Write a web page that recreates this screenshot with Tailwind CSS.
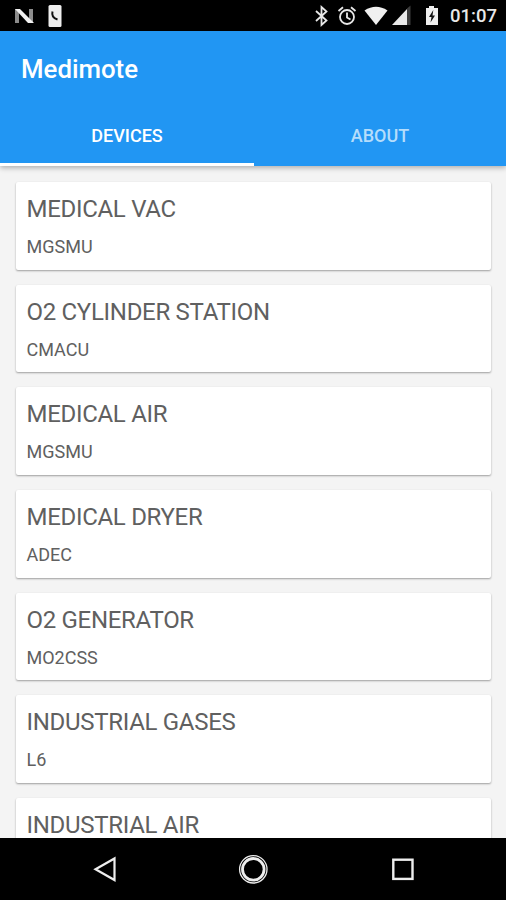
<!DOCTYPE html>
<html lang="en">
<head>
<meta charset="utf-8">
<title>Medimote</title>
<script src="https://cdn.jsdelivr.net/npm/@tailwindcss/browser@4"></script>
</head>
<body class="w-[506px] h-[900px] overflow-hidden flex flex-col bg-[#f4f4f4] font-[Roboto,sans-serif]">
<div class="h-[31px] shrink-0 bg-black flex items-center justify-between">
  <svg class="w-[80px] h-[31px]" viewBox="0 0 80 31">
    <path d="M15 9h4v14h-4zM29 9h4v14h-4z" fill="#8c8c8c"/>
    <path d="M15 9h5l14 14h-6z" fill="#f2f2f2"/>
    <rect x="48.500" y="5" width="13" height="22" rx="1.500" fill="#eee"/>
    <path d="M52.500 11.500q-1.500 6 5 8" fill="none" stroke="#111" stroke-width="2"/>
  </svg>
  <div class="flex items-center">
    <svg class="w-[142px] h-[31px]" viewBox="306 0 142 31" fill="none">
      <path d="M316 11l10.500 9.500-5 4.500V7l5 4.500L316 21" stroke="#e8e8e8" stroke-width="1.800"/>
      <circle cx="347" cy="17" r="7" stroke="#e8e8e8" stroke-width="1.800"/>
      <path d="M347 12.500v5l3.500 2M338.500 11l4.500-3.700M355.500 11L351 7.300" stroke="#e8e8e8" stroke-width="1.800"/>
      <path d="M364.500 10.500q11.500-7.500 23 0L376 25z" fill="#f0f0f0"/>
      <path d="M407 8.500l3.500-3V25H407z" fill="#3c3c3c"/>
      <path d="M392 25l15-16v16z" fill="#e8e8e8"/>
      <path d="M426 8h3V6h5v2h4v17h-12z" fill="#eee"/>
      <path d="M433.300 10l-4.300 7h2.500l-1 5.500 4.500-7h-2.500z" fill="#111"/>
    </svg>
    <span class="w-[58px] text-[18.500px] leading-[31px] pl-[2px] pt-[2px] font-medium text-[#e8e8e8]">01:07</span>
  </div>
</div>
<header class="relative z-10 h-[135px] shrink-0 bg-[#2196f3] shadow-[0_2px_5px_rgba(0,0,0,0.28)] flex flex-col text-white">
  <h1 class="h-[75px] pl-[21px] text-[25.800px] leading-[76px] font-medium">Medimote</h1>
  <nav class="flex h-[60px] text-[18px] leading-[60px] font-medium text-center">
    <div class="w-[254px] h-[60px] leading-[59px] border-b-[3px] border-white">DEVICES</div>
    <div class="w-[252px] leading-[59px] text-[#b5ddfb]">ABOUT</div>
  </nav>
</header>
<main class="h-[672px] shrink-0 overflow-hidden pt-[16px] pl-[16px] pr-[15px] flex flex-col gap-[15.200px] text-[#606060]">
  <section class="h-[87.500px] shrink-0 rounded-[2px] bg-white shadow-[0_1px_2px_rgba(0,0,0,0.36)] pl-[10.500px] pt-[8px]"><h2 class="text-[24px] leading-[38px] tracking-[-0.300px]">MEDICAL VAC</h2><p class="text-[18px] leading-[38px]">MGSMU</p></section>
  <section class="h-[87.500px] shrink-0 rounded-[2px] bg-white shadow-[0_1px_2px_rgba(0,0,0,0.36)] pl-[10.500px] pt-[8px]"><h2 class="text-[24px] leading-[38px] tracking-[-0.300px]">O2 CYLINDER STATION</h2><p class="text-[18px] leading-[38px]">CMACU</p></section>
  <section class="h-[87.500px] shrink-0 rounded-[2px] bg-white shadow-[0_1px_2px_rgba(0,0,0,0.36)] pl-[10.500px] pt-[8px]"><h2 class="text-[24px] leading-[38px] tracking-[-0.300px]">MEDICAL AIR</h2><p class="text-[18px] leading-[38px]">MGSMU</p></section>
  <section class="h-[87.500px] shrink-0 rounded-[2px] bg-white shadow-[0_1px_2px_rgba(0,0,0,0.36)] pl-[10.500px] pt-[8px]"><h2 class="text-[24px] leading-[38px] tracking-[-0.300px]">MEDICAL DRYER</h2><p class="text-[18px] leading-[38px]">ADEC</p></section>
  <section class="h-[87.500px] shrink-0 rounded-[2px] bg-white shadow-[0_1px_2px_rgba(0,0,0,0.36)] pl-[10.500px] pt-[8px]"><h2 class="text-[24px] leading-[38px] tracking-[-0.300px]">O2 GENERATOR</h2><p class="text-[18px] leading-[38px]">MO2CSS</p></section>
  <section class="h-[87.500px] shrink-0 rounded-[2px] bg-white shadow-[0_1px_2px_rgba(0,0,0,0.36)] pl-[10.500px] pt-[8px]"><h2 class="text-[24px] leading-[38px] tracking-[-0.300px]">INDUSTRIAL GASES</h2><p class="text-[18px] leading-[38px]">L6</p></section>
  <section class="h-[87.500px] shrink-0 rounded-[2px] bg-white shadow-[0_1px_2px_rgba(0,0,0,0.36)] pl-[10.500px] pt-[8px]"><h2 class="text-[24px] leading-[38px] tracking-[-0.300px]">INDUSTRIAL AIR</h2></section>
</main>
<footer class="h-[62px] shrink-0 bg-black">
  <svg class="w-[506px] h-[62px]" viewBox="0 838 506 62" fill="none" stroke="#eee">
    <path d="M114.500 858.500v21.500L95.500 869.300z" stroke-width="2.200"/>
    <circle cx="253.300" cy="869.300" r="13.700" stroke-width="1.300"/>
    <circle cx="253.300" cy="869.300" r="10.800" stroke-width="2.800"/>
    <rect x="393.300" y="859.700" width="19.200" height="19.200" stroke-width="2.400"/>
  </svg>
</footer>
</body>
</html>
